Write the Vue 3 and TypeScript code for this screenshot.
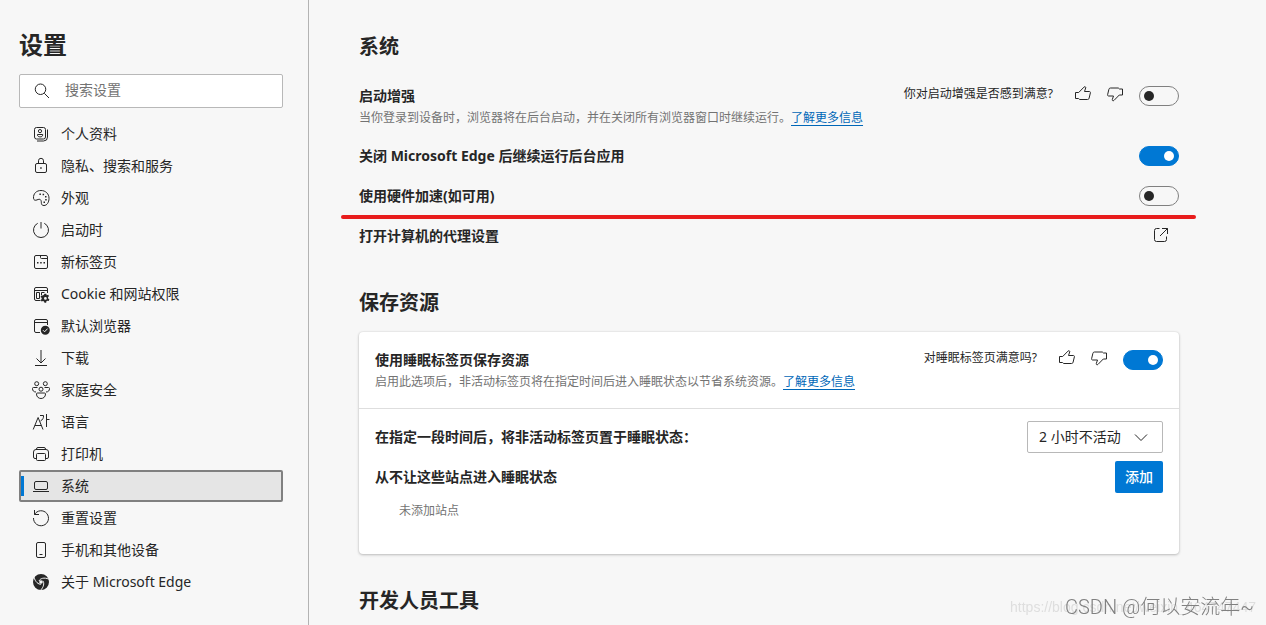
<script setup lang="ts">
import { ref } from 'vue'

interface NavItem {
  label: string
  line?: string
  fill?: string
  cut?: string
}

const navItems: NavItem[] = [
  {
    label: '个人资料',
    line: 'M4.5 2.5h7a2 2 0 0 1 2 2v7.5a2 2 0 0 1-2 2h-7a2 2 0 0 1-2-2v-7.5a2 2 0 0 1 2-2zM15.5 4.5v7.5a4 4 0 0 1-4 4h-6.500M8 4.500a1.600 1.600 0 1 1 0 3.200a1.600 1.600 0 1 1 0-3.200zM5.500 9.500h5.200v.6c0 2.400-5.200 2.400-5.200 0z',
  },
  {
    label: '隐私、搜索和服务',
    line: 'M5 6.500h8a1.500 1.500 0 0 1 1.500 1.500v6a1.500 1.500 0 0 1-1.500 1.500h-8a1.500 1.500 0 0 1-1.500-1.500v-6a1.500 1.500 0 0 1 1.500-1.500zM6.500 6.500v-2.700a2.500 2.500 0 0 1 5 0v2.700',
    fill: 'M8.200 10.200h1.500v1.500h-1.500z',
  },
  {
    label: '外观',
    line: 'M1.500 9.200C1.200 4.500 4.500 1.500 9 1.500c4.600 0 8 3.300 8 7.800 0 4-2 7.200-5 7.200-3.600 0-2.200-3.200-3-5-.8-1.900-2.600-1.200-4-.6-1.600.7-3.300.5-3.500-1.700z',
    fill: 'M7.400 4.500h1.500v1.500h-1.500zM10.600 4.800h1.500v1.500h-1.500zM13 7h1.500v1.500h-1.500zM13.200 10h1.500v1.500h-1.500zM11.500 12.600h1.500v1.500h-1.500z',
  },
  { label: '启动时', line: 'M9 1v6.500M5.700 2.300a7.500 7.500 0 1 0 6.600 0' },
  {
    label: '新标签页',
    line: 'M4 2.500h10a1.500 1.500 0 0 1 1.500 1.500v10a1.500 1.500 0 0 1-1.500 1.500h-10a1.500 1.500 0 0 1-1.500-1.500v-10a1.500 1.500 0 0 1 1.500-1.500zM8.500 2.500v2a1 1 0 0 0 1 1h6',
    fill: 'M5 9h1.500v1.500h-1.500zM8.200 9h1.500v1.500h-1.500zM11.500 9h1.500v1.500h-1.500z',
  },
  {
    label: 'Cookie 和网站权限',
    line: 'M8.500 15.500h-4.500a1.500 1.500 0 0 1-1.500-1.500v-10a1.500 1.500 0 0 1 1.500-1.500h10a1.500 1.500 0 0 1 1.500 1.500v4M2.500 5.500h13M4.500 7.500h3v6h-3zM9.500 10v-2.500h3',
    fill: 'M12.600 8.800h1.700l.4 1.400 1.400-.5.9 1.400-1 1.200.1 1.200 1.300.8-.7 1.600-1.600-.2-.8.8-.1 1.300h-1.700l-.5-1.400-1-.4-1.400.5-.9-1.500 1-1.100-.1-1.200-1.100-.8.700-1.500 1.500.2.900-.7zM13.400 12a1.400 1.400 0 1 0 0 2.800a1.400 1.400 0 1 0 0-2.800z',
  },
  {
    label: '默认浏览器',
    line: 'M8 15.500h-4a1.500 1.500 0 0 1-1.500-1.500v-10a1.500 1.500 0 0 1 1.500-1.500h10a1.500 1.500 0 0 1 1.500 1.500v4M2.500 5.500h13',
    fill: 'M13.300 8.700a4.500 4.500 0 1 1 0 9a4.500 4.500 0 1 1 0-9z',
    cut: 'M11 13.200l1.600 1.600 3-3.200',
  },
  { label: '下载', line: 'M9 1v12.500M4.500 9.500l4.500 4.500 4.500-4.500M3 16.500h12' },
  {
    label: '家庭安全',
    line: 'M4.700.7a2 2 0 1 1 0 4a2 2 0 1 1 0-4zM13.300.7a2 2 0 1 1 0 4a2 2 0 1 1 0-4zM9 6.200a2 2 0 1 1 0 4a2 2 0 1 1 0-4zM5.500 12h7a1 1 0 0 1 1 1c0 6-9 6-9 0a1 1 0 0 1 1-1zM5.500 6.500h-4a1 1 0 0 0-1 1c0 2.200 1.200 3.500 3.500 3.500M12.500 6.500h4a1 1 0 0 1 1 1c0 2.200-1.200 3.500-3.500 3.500',
  },
  {
    label: '语言',
    line: 'M1.200 16.500l4.900-12 4.900 12M2.900 12.500h6.400M8 2.500h3.500c.3 2.500-.9 4.300-3 5.500M14.500 1v13M14.500 6.500h3',
  },
  {
    label: '打印机',
    line: 'M4.500 4.500v-.500a1.500 1.500 0 0 1 1.500-1.500h6a1.500 1.500 0 0 1 1.500 1.500v.5M4.500 13.500h-1.500a1.500 1.500 0 0 1-1.500-1.500v-5a2.500 2.500 0 0 1 2.500-2.500h10a2.500 2.500 0 0 1 2.500 2.500v5a1.500 1.500 0 0 1-1.500 1.500h-1.500M5.500 8.500h7a1 1 0 0 1 1 1v5a1 1 0 0 1-1 1h-7a1 1 0 0 1-1-1v-5a1 1 0 0 1 1-1z',
  },
  {
    label: '系统',
    line: 'M4 4.500h10a1.500 1.500 0 0 1 1.500 1.500v5a1.500 1.500 0 0 1-1.500 1.500h-10a1.500 1.500 0 0 1-1.500-1.500v-5a1.500 1.500 0 0 1 1.500-1.500zM1 14.500h16',
  },
  { label: '重置设置', line: 'M2.500 1v4.500h4.500M2.500 5.500a7.500 7.500 0 1 1-1 3.500' },
  {
    label: '手机和其他设备',
    line: 'M6 1.500h6a1.500 1.500 0 0 1 1.500 1.500v12a1.500 1.500 0 0 1-1.500 1.500h-6a1.500 1.500 0 0 1-1.500-1.500v-12a1.500 1.500 0 0 1 1.500-1.500zM7.500 13.500h3',
  },
  {
    label: '关于 Microsoft Edge',
    fill: 'M9 1a8 8 0 1 1 0 16a8 8 0 1 1 0-16zM9 7.200a1.800 1.800 0 1 0 0 3.600a1.800 1.800 0 1 0 0-3.600z',
    cut: 'M7 8C8 5.500 12 4 17 6.200M10.900 7.800C12.500 9.900 11.800 14.100 8.500 17.300M9.100 11.200C6.500 11.600 3.200 8.900 2 4.200',
  },
]

const thumbUp =
  'M.5 6.500h3.200l5.300-5.400c1-.9 2-.1 1.700.9l-1.200 3.500h4.700c.9 0 1.400.5 1.200 1.300l-1.300 5.400c-.2.900-.7 1.300-1.600 1.300h-7.800l-1.200-1h-3z'
const thumbDown =
  'M15.500 9h-3.200l-5.300 5.400c-1 .9-2 .1-1.700-.9l1.200-3.500h-4.700c-.9 0-1.400-.5-1.200-1.300l1.300-5.400c.2-.9.700-1.300 1.600-1.300h7.800l1.200 1h3z'

const activeItem = ref('系统')
const query = ref('')
const startupBoost = ref(false)
const background = ref(true)
const hardware = ref(false)
const sleepingTabs = ref(true)
const timeout = ref('2 小时不活动')
</script>

<template>
  <div class="page">
    <aside class="sidebar">
      <h1>设置</h1>
      <label class="search">
        <svg width="16" height="16" viewBox="0 0 16 16" aria-hidden="true">
          <path class="line" d="M6.500 1a5 5 0 1 1 0 10.500a5 5 0 1 1 0-10.500zM10.300 10.300l4.700 4.700" />
        </svg>
        <input v-model="query" type="search" placeholder="搜索设置" aria-label="搜索设置" />
      </label>
      <nav>
        <a
          v-for="item in navItems"
          :key="item.label"
          href="#"
          :class="{ active: item.label === activeItem }"
          @click.prevent="activeItem = item.label"
        >
          <svg width="18" height="18" viewBox="0 0 18 18" aria-hidden="true">
            <path v-if="item.line" class="line" :d="item.line" />
            <path v-if="item.fill" class="solid" :d="item.fill" />
            <path v-if="item.cut" class="cut" :d="item.cut" />
          </svg>
          <span>{{ item.label }}</span>
        </a>
      </nav>
    </aside>

    <main>
      <section>
        <h2>系统</h2>
        <div class="row tall">
          <div class="text">
            <label for="boost">启动增强</label>
            <p>当你登录到设备时，浏览器将在后台启动，并在关闭所有浏览器窗口时继续运行。<a href="#">了解更多信息</a></p>
          </div>
          <div class="controls">
            <span class="ask">你对启动增强是否感到满意?</span>
            <button class="thumb" type="button" aria-label="满意">
              <svg width="16" height="16" viewBox="0 0 16 16"><path class="line" :d="thumbUp" /></svg>
            </button>
            <button class="thumb" type="button" aria-label="不满意">
              <svg width="16" height="16" viewBox="0 0 16 16"><path class="line" :d="thumbDown" /></svg>
            </button>
            <input id="boost" v-model="startupBoost" class="toggle" type="checkbox" />
          </div>
        </div>
        <div class="row">
          <label for="background">关闭 Microsoft Edge 后继续运行后台应用</label>
          <input id="background" v-model="background" class="toggle" type="checkbox" />
        </div>
        <div class="row marked">
          <label for="hardware">使用硬件加速(如可用)</label>
          <input id="hardware" v-model="hardware" class="toggle" type="checkbox" />
        </div>
        <div class="row">
          <span class="label">打开计算机的代理设置</span>
          <button class="external" type="button" aria-label="打开计算机的代理设置">
            <svg width="16" height="16" viewBox="0 0 16 16">
              <path class="line" d="M6.500 1.500h-3a2 2 0 0 0-2 2v9a2 2 0 0 0 2 2h8a2 2 0 0 0 2-2v-3M9 1.500h5.500v5.500M14.500 1.500l-7.500 7.500" />
            </svg>
          </button>
        </div>
      </section>

      <section>
        <h2>保存资源</h2>
        <div class="card">
          <div class="row tall">
            <div class="text">
              <label for="sleep">使用睡眠标签页保存资源</label>
              <p>启用此选项后，非活动标签页将在指定时间后进入睡眠状态以节省系统资源。<a href="#">了解更多信息</a></p>
            </div>
            <div class="controls">
              <span class="ask">对睡眠标签页满意吗?</span>
              <button class="thumb" type="button" aria-label="满意">
                <svg width="16" height="16" viewBox="0 0 16 16"><path class="line" :d="thumbUp" /></svg>
              </button>
              <button class="thumb" type="button" aria-label="不满意">
                <svg width="16" height="16" viewBox="0 0 16 16"><path class="line" :d="thumbDown" /></svg>
              </button>
              <input id="sleep" v-model="sleepingTabs" class="toggle" type="checkbox" />
            </div>
          </div>
          <div class="details">
            <div class="row">
              <label for="timeout">在指定一段时间后，将非活动标签页置于睡眠状态：</label>
              <div class="select">
                <select id="timeout" v-model="timeout">
                  <option>2 小时不活动</option>
                  <option>6 小时不活动</option>
                </select>
                <svg width="14" height="14" viewBox="0 0 14 14" aria-hidden="true">
                  <path class="line" d="M1 4.500l6 6 6-6" />
                </svg>
              </div>
            </div>
            <div class="row">
              <span class="label">从不让这些站点进入睡眠状态</span>
              <button class="add" type="button">添加</button>
            </div>
            <p class="empty">未添加站点</p>
          </div>
        </div>
      </section>

      <section>
        <h2>开发人员工具</h2>
      </section>
    </main>

    <div class="watermark">
      <span class="url">https://blog.csdn.net/weixin_464747447</span>
      <span class="author">CSDN @何以安流年~</span>
    </div>
  </div>
</template>

<style>
body {
  margin: 0;
  background: #f7f7f7;
}
</style>

<style scoped>
.page {
  display: flex;
  height: 100vh;
  overflow: hidden;
  background: #f7f7f7;
  color: #262626;
  font: 14px/20px "Noto Sans", "Noto Sans CJK SC", sans-serif;
}
.page * {
  box-sizing: border-box;
}
input,
button,
select {
  margin: 0;
  color: inherit;
  font: inherit;
}
button {
  padding: 0;
  border: 0;
  background: none;
}
svg {
  display: block;
  flex: none;
}
.line {
  fill: none;
  stroke: #262626;
}
.solid {
  fill: #262626;
  fill-rule: evenodd;
}
.cut {
  fill: none;
  stroke: #f7f7f7;
}
.sidebar {
  flex: none;
  width: 309px;
  padding: 29px 25px 0 19px;
  border-right: 1px solid #b3b3b3;
}
h1 {
  margin: 0 0 13px;
  font-size: 24px;
  line-height: 32px;
  font-weight: 700;
}
.search {
  display: flex;
  align-items: center;
  gap: 15px;
  height: 34px;
  margin-bottom: 10px;
  padding: 0 14px;
  border: 1px solid #b8b8b8;
  border-radius: 2px;
  background: #fff;
}
.search input {
  flex: 1;
  min-width: 0;
  height: 32px;
  padding: 0 0 4px;
  border: 0;
  outline: 0;
  background: none;
}
.search input::placeholder {
  color: #737373;
}
nav a {
  display: flex;
  position: relative;
  align-items: center;
  gap: 11px;
  height: 32px;
  padding-left: 11px;
  border: 2px solid transparent;
  border-radius: 2px;
  color: inherit;
  text-decoration: none;
}
nav a.active {
  border-color: #808080;
  background: #e5e5e5;
}
nav a.active::before {
  position: absolute;
  top: 4px;
  bottom: 4px;
  left: 0;
  width: 3px;
  background: #0078d4;
  content: "";
}
main {
  flex: 1;
  max-width: 870px;
  padding: 31px 0 0 50px;
}
h2 {
  margin: 0;
  font-size: 20px;
  line-height: 32px;
  font-weight: 700;
}
section:first-child h2 {
  margin-bottom: 13px;
}
section + section {
  margin-top: 31px;
}
.row {
  display: flex;
  align-items: center;
  justify-content: space-between;
  height: 40px;
}
.row.tall {
  align-items: flex-start;
  height: auto;
  padding: 10px 0 8px;
}
.row label,
.label {
  font-weight: 700;
}
.text label {
  display: block;
}
.text p {
  margin: 2px 0 0;
  color: #737373;
  font-size: 12px;
}
.text a {
  color: #0067b8;
  text-decoration: underline;
  text-underline-offset: 3px;
}
.controls {
  display: flex;
  align-items: flex-start;
  gap: 16px;
}
.ask {
  margin-right: 6px;
  font-size: 12px;
  line-height: 16px;
}
.thumb {
  width: 16px;
  height: 16px;
}
.toggle {
  flex: none;
  display: flex;
  align-items: center;
  width: 40px;
  height: 20px;
  padding: 0 4px;
  border: 1px solid #808080;
  border-radius: 10px;
  appearance: none;
}
.toggle::before {
  width: 10px;
  height: 10px;
  border-radius: 5px;
  background: #262626;
  content: "";
}
.toggle:checked {
  justify-content: flex-end;
  border-color: #0078d4;
  background: #0078d4;
}
.toggle:checked::before {
  background: #fff;
}
.marked {
  position: relative;
}
.marked::after {
  position: absolute;
  right: -17px;
  bottom: -3px;
  left: -18px;
  height: 4px;
  border-radius: 2px;
  background: #e81c1c;
  content: "";
}
.external {
  padding: 0 10px 2px;
}
.card {
  margin-top: 13px;
  border-radius: 4px;
  background: #fff;
  box-shadow: 0 1px 3px rgba(0, 0, 0, 0.22), 0 0 2px rgba(0, 0, 0, 0.12);
}
.card .row.tall {
  padding: 18px 16px 16px;
  border-bottom: 1px solid #dedede;
}
.details {
  padding: 8px 16px 33px;
}
.select {
  position: relative;
}
.select select {
  display: block;
  width: 136px;
  height: 32px;
  padding: 0 32px 0 11px;
  border: 1px solid #b8b8b8;
  border-radius: 2px;
  background: #fff;
  appearance: none;
}
.select svg {
  position: absolute;
  top: 9px;
  right: 15px;
  pointer-events: none;
}
.add {
  width: 48px;
  height: 32px;
  border-radius: 2px;
  background: #0078d4;
  color: #fff;
  font-weight: 500;
}
.empty {
  margin: 4px 24px 0;
  color: #737373;
  font-size: 12px;
}
.watermark {
  display: grid;
  position: fixed;
  right: 10px;
  bottom: 6px;
  align-items: center;
  justify-items: end;
  line-height: 24px;
  pointer-events: none;
}
.watermark span {
  grid-area: 1 / 1;
  white-space: nowrap;
}
.url {
  color: #dedede;
  font-family: "Liberation Sans", sans-serif;
}
.author {
  padding-right: 2px;
  color: #808080;
  font-family: Roboto, "Noto Sans CJK SC", sans-serif;
  font-size: 20px;
  font-weight: 300;
}
</style>
